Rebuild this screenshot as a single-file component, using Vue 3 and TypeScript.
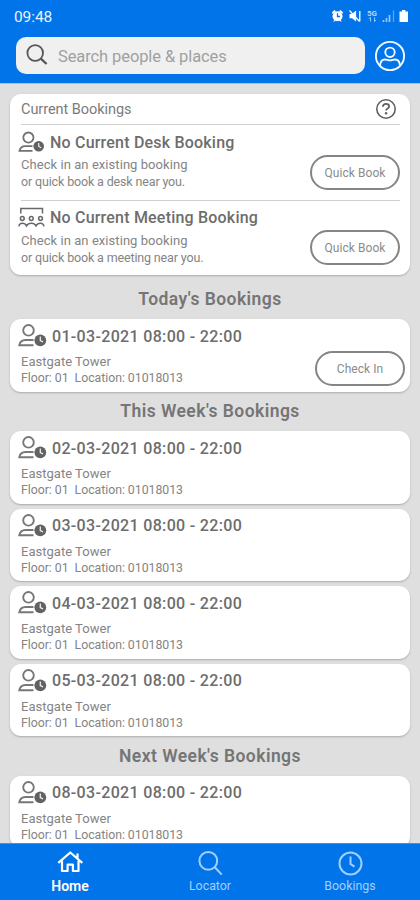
<script setup lang="ts">
interface Booking { id: string; when: string; checkIn?: boolean }
interface Section { title: string; bookings: Booking[] }

const current = [
  { kind: 'desk', title: 'No Current Desk Booking', hint: 'or quick book a desk near you.' },
  { kind: 'meeting', title: 'No Current Meeting Booking', hint: 'or quick book a meeting near you.' },
]
const day = (d: string, checkIn = false): Booking => ({ id: d, when: `${d}-03-2021 08:00 - 22:00`, checkIn })
const sections: Section[] = [
  { title: "Today's Bookings", bookings: [day('01', true)] },
  { title: "This Week's Bookings", bookings: [day('02'), day('03'), day('04'), day('05')] },
  { title: "Next Week's Bookings", bookings: [day('08')] },
]
</script>

<template>
  <div class="screen">
    <header class="header">
      <div class="status">
        <span class="time">09:48</span>
        <svg class="status-icons" width="78" height="14" viewBox="0 0 78 14">
          <g fill="#fff">
            <circle cx="6.5" cy="7.2" r="5" />
            <path d="M0.8 3.6 3.4 1l1.5 1.2-3 2.8zM12.2 3.6 9.6 1 8.1 2.2l3 2.8zM2.2 13l1.2-2.2 1.5 1zM10.8 13l-1.2-2.2-1.5 1z" />
            <path d="M18.5 5h2.6l4-3.6v11.2L21 9.3h-2.5z" />
            <path d="M68.5 2.6h2.5V1h3.4v1.6h2.6V13h-8.5z" />
          </g>
          <path d="M6.5 4.3v3.2h2.6" fill="none" stroke="#0074e8" stroke-width="1.3" />
          <path d="M18.5 1.5l10 11M28.8 2v10.6" fill="none" stroke="#fff" stroke-width="1.3" />
          <text x="36" y="6.8" class="net">5G</text>
          <g fill="none" stroke="#fff" opacity=".6">
            <path d="M39.5 12.5V8.3M38 9.8l1.5-1.6M43.5 8.3v4.2l1.5-1.6" />
            <path d="M52.5 11v2M55.5 9v4M58.5 6v7" stroke-width="1.7" />
            <path d="M62.5 1.5V13" opacity=".6" stroke-width="1.3" />
          </g>
        </svg>
      </div>
      <div class="search-row">
        <div class="search">
          <svg width="22" height="22" viewBox="0 0 22 22" fill="none" stroke="#55565a">
            <circle cx="9.2" cy="9" r="7.8" stroke-width="1.8" />
            <path d="M14.8 14.7l5.8 5.3" stroke-width="2.3" />
          </svg>
          <span>Search people &amp; places</span>
        </div>
        <svg class="avatar" width="32" height="32" viewBox="0 0 32 32" fill="none" stroke="#f2f8ff" stroke-width="1.9">
          <circle cx="16" cy="16" r="14.1" />
          <circle cx="16" cy="12.3" r="4.7" />
          <path d="M6 25.5c.3-3.8 2-6 5-6 1.8 0 2.7.9 5 .9s3.2-.9 5-.9c3 0 4.7 2.2 5 6" />
        </svg>
      </div>
    </header>

    <main class="content">
      <section class="card current">
        <div class="current-head">
          <span>Current Bookings</span>
          <svg width="22" height="22" viewBox="0 0 22 22">
            <circle cx="11" cy="11" r="9.2" fill="none" stroke="#606060" stroke-width="1.6" />
            <path d="M7.9 8.8c.1-1.9 1.3-2.9 3.1-2.9 1.9 0 3.1 1 3.1 2.5 0 2.2-3 2.1-3 4.2" fill="none" stroke="#606060" stroke-width="1.8" />
            <circle cx="11.1" cy="15.3" r="1.2" fill="#606060" />
          </svg>
        </div>
        <div v-for="item in current" :key="item.kind" class="current-item">
          <div class="item-text">
            <div class="item-title">
              <svg v-if="item.kind === 'desk'" width="28" height="24" viewBox="0 0 28 24">
                <g fill="none" stroke="#727272" stroke-width="1.8">
                  <circle cx="10.4" cy="7.6" r="5.1" />
                  <path d="M14.5 16.2H7.5c-3.5 0-5.2 1.4-6 4.6h13" />
                </g>
                <circle cx="20.7" cy="16.3" r="5.3" fill="#626262" />
                <path d="M20.7 12.9v3.6l2.5 1.3" fill="none" stroke="#eee" stroke-width="1.2" />
              </svg>
              <svg v-else width="28" height="24" viewBox="0 0 28 24" fill="none" stroke="#686868" stroke-width="1.5">
                <path d="M2.8 7.5V2.5h21.7v5" />
                <circle cx="4.3" cy="12.5" r="1.9" /><circle cx="13.3" cy="12.5" r="1.9" /><circle cx="22.5" cy="12.5" r="1.9" />
                <path d="M.8 20.3c.5-2.4 1.7-3 3.5-3s3.3.6 4.3 2.5c1-1.9 2.3-2.5 4.7-2.5s3.7.6 4.7 2.5c1-1.9 2.5-2.5 4.5-2.5 1.8 0 3 .6 3.5 3" />
              </svg>
              <span>{{ item.title }}</span>
            </div>
            <p class="hint first">Check in an existing booking</p>
            <p class="hint second">{{ item.hint }}</p>
          </div>
          <button class="pill">Quick Book</button>
        </div>
      </section>

      <section v-for="section in sections" :key="section.title">
        <h2>{{ section.title }}</h2>
        <div class="list">
          <article v-for="b in section.bookings" :key="b.id" class="card booking">
            <div>
              <div class="when">
                <svg width="30" height="26" viewBox="0 0 30 26">
                  <g fill="none" stroke="#777" stroke-width="1.9">
                    <circle cx="10.5" cy="7.3" r="5.3" />
                    <path d="M15.5 17H7.5c-3.7 0-5.5 1.6-6.2 5.3H15.5" />
                  </g>
                  <circle cx="22.3" cy="17.3" r="5.9" fill="#626262" />
                  <path d="M22.3 13.6v3.9l2.7 1.4" fill="none" stroke="#eee" stroke-width="1.3" />
                </svg>
                <span>{{ b.when }}</span>
              </div>
              <p class="place">Eastgate Tower</p>
              <p class="floor"><span>Floor: 01</span><span>Location: 01018013</span></p>
            </div>
            <button v-if="b.checkIn" class="pill">Check In</button>
          </article>
        </div>
      </section>
    </main>

    <nav class="nav">
      <a class="tab active">
        <svg width="28" height="26" viewBox="0 0 28 26" fill="none" stroke="#fff" stroke-width="2.2" stroke-linejoin="round">
          <path d="M2.3 12.8 14.3 2.5l12 10.3M6 10.8v10.2h5.6v-6.3h5.3v6.3h5.6v-10.2M21.5 3.5v4.5" />
        </svg>
        <span>Home</span>
      </a>
      <a class="tab">
        <svg width="28" height="26" viewBox="0 0 28 26" fill="none" stroke="#a1cfff" stroke-width="2">
          <circle cx="12.3" cy="10.8" r="8.9" /><path d="M18.8 17.3l7 7.3" />
        </svg>
        <span>Locator</span>
      </a>
      <a class="tab">
        <svg width="28" height="26" viewBox="0 0 28 26" fill="none" stroke="#a1cfff" stroke-width="2">
          <circle cx="14.5" cy="13.5" r="11" /><path d="M14.5 6.5v7.5l4 2.7" />
        </svg>
        <span>Bookings</span>
      </a>
    </nav>
  </div>
</template>

<style>
body { margin: 0; }
</style>

<style scoped>
* { box-sizing: border-box; }
.screen { width: 420px; height: 900px; overflow: hidden; display: flex; flex-direction: column; background: #dfdfdf; color: #6d6d6d; font-family: Roboto, sans-serif; }
.header { height: 84px; flex: none; background: #0074e8; border-bottom: 1px solid #9fc4ec; }
.status { height: 37px; padding: 8px 11px 0 14px; display: flex; justify-content: space-between; align-items: flex-start; }
.status-icons { margin-top: 1px; }
.time { font-size: 15.5px; line-height: 18px; color: #e8f3ff; letter-spacing: -.1px; }
.net { font-size: 8px; font-weight: 700; fill: #b5d7ff; }
.search-row { display: flex; align-items: center; padding: 0 14px 0 16px; justify-content: space-between; }
.search { width: 349px; height: 37px; border-radius: 10px; background: #f0f0f0; display: flex; align-items: center; padding: 0 10px; gap: 10px; font-size: 16.5px; letter-spacing: -.1px; color: #a0a0a0; }
.search svg { margin-top: -1px; }
.search span { line-height: 20px; margin-top: 2px; }
.content { flex: 1; min-height: 0; overflow: hidden; padding: 10px 10px 0; }
.card { background: #fff; border-radius: 11px; box-shadow: 0 1px 2px #aaa; }
.current { height: 181px; padding: 0 10px 0 11px; }
.current-head { height: 31px; border-bottom: 1px solid #cfcfcf; display: flex; justify-content: space-between; align-items: center; padding-right: 3px; font-size: 14.5px; letter-spacing: -.05px; color: #7b7b7b; }
.current-item { height: 75.5px; display: flex; justify-content: space-between; border-bottom: 1px solid #cfcfcf; }
.current-item:last-child { border: 0; height: 74px; }
.item-title, .when { display: flex; align-items: center; font-weight: 500; font-size: 16px; white-space: nowrap; }
.item-title { height: 24px; margin-top: 5px; margin-left: -3px; gap: 4px; letter-spacing: .2px; }
p { margin: 0; white-space: nowrap; font-weight: 400; }
.hint { font-size: 13px; line-height: 17px; letter-spacing: .06px; color: #848484; }
.hint.first { margin-top: 2px; }
.hint.second { font-size: 12.5px; letter-spacing: -.15px; }
.pill { width: 90px; height: 35px; flex: none; border: 2px solid #858585; border-radius: 18px; background: #fff; color: #8b8b8b; font: 400 12px/16px Roboto, sans-serif; letter-spacing: .05px; padding: 1px 0 0; }
.current-item .pill { margin-top: 29.5px; }
h2 { margin: 0; height: 39.5px; display: flex; align-items: center; justify-content: center; font-size: 17.5px; font-weight: 600; line-height: 24px; letter-spacing: .45px; color: #757575; }
section:nth-of-type(2) h2 { height: 44px; padding-top: 3px; }
.list { display: flex; flex-direction: column; gap: 5px; }
.booking { height: 72.5px; display: flex; justify-content: space-between; padding: 4px 5px 0 11px; }
.when { height: 26px; margin-left: -3px; gap: 4px; letter-spacing: .33px; }
.place { font-size: 13px; line-height: 17px; margin-top: 4px; letter-spacing: .02px; color: #848484; }
.floor { display: flex; gap: 6px; font-size: 12.3px; line-height: 17px; letter-spacing: -.03px; color: #848484; }
.booking .pill { margin-top: 28px; }
.nav { height: 57px; flex: none; background: #0074e8; border-top: 1px solid #3a92ec; display: grid; grid-template-columns: repeat(3, 1fr); }
.tab { display: flex; flex-direction: column; align-items: center; padding-top: 6px; color: #a1cfff; font-size: 12.4px; line-height: 16px; }
.tab span { margin-top: 2px; }
.active { color: #fff; font-weight: 600; font-size: 14px; }
</style>
